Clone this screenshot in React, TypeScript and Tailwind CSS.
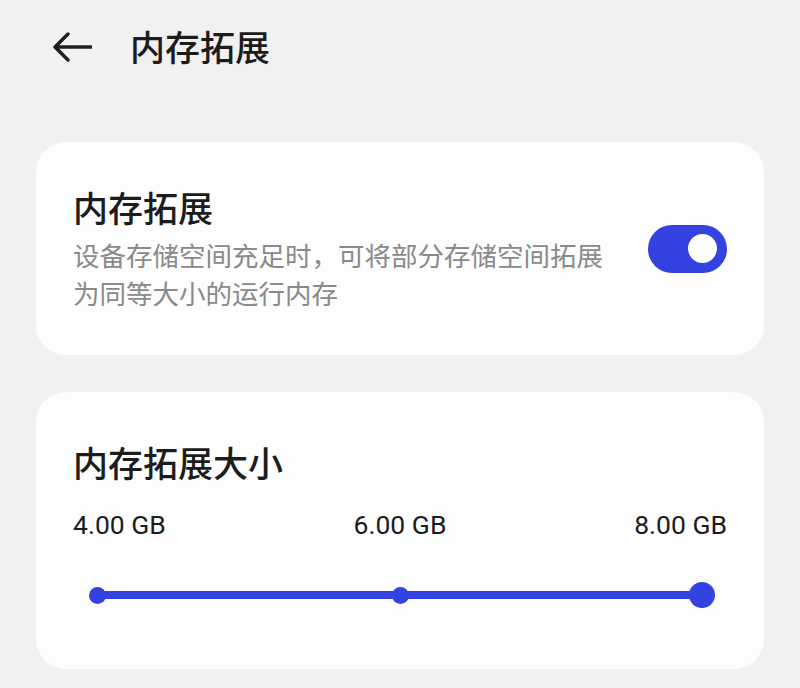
import React from "react";

export default function App() {
  const cjk = { fontFamily: '"Noto Sans CJK SC", "Noto Sans", sans-serif' } as React.CSSProperties;
  return (
    <div className="w-[800px] h-[688px] bg-[#f1f1f1] overflow-hidden" style={cjk}>
      <div className="h-[98px] flex items-center pl-[52px]">
        <svg width="40" height="30" viewBox="0 0 40 30" fill="none" className="mt-[-4px]">
          <path d="M39 15H3M16 2L3 15L16 28" stroke="#1f1f1f" strokeWidth="3.4" strokeLinecap="round" strokeLinejoin="round" />
        </svg>
        <div className="ml-[38px] mt-[-6px] text-[35px] leading-[40px] font-medium text-[#1c1c1c]">内存拓展</div>
      </div>
      <div className="flex flex-col gap-[37px] pt-[44px] px-[36px]">
        <div className="h-[213px] bg-[#fdfdfd] rounded-[30px] px-[37px] flex items-center justify-between">
          <div className="w-[545px]">
            <div className="text-[35px] leading-[42px] font-medium text-[#1c1c1c]">内存拓展</div>
            <div className="mt-[8px] text-[26.5px] leading-[38px] text-[#8a8a8a]">
              设备存储空间充足时，可将部分存储空间拓展为同等大小的运行内存
            </div>
          </div>
          <div className="w-[79px] h-[48px] rounded-full bg-[#3342e0] flex items-center justify-end pr-[10px]">
            <div className="w-[29px] h-[29px] rounded-full bg-white" />
          </div>
        </div>
        <div className="h-[277px] bg-[#fdfdfd] rounded-[30px] px-[37px] pt-[49px]">
          <div className="text-[35px] leading-[42px] font-medium text-[#1c1c1c]">内存拓展大小</div>
          <div
            className="mt-[27px] flex justify-between text-[26.5px] leading-[30px] text-[#1c1c1c]"
            style={{ fontFamily: 'Roboto, "Noto Sans", sans-serif' }}
          >
            <span>4.00 GB</span>
            <span>6.00 GB</span>
            <span>8.00 GB</span>
          </div>
          <div className="relative mt-[51px] ml-[24px] mr-[25px] h-[8px] rounded-full bg-[#3342e0]">
            <div className="absolute left-[-8px] top-[-4px] w-[17px] h-[17px] rounded-full bg-[#3342e0]" />
            <div className="absolute left-[295px] top-[-4px] w-[17px] h-[17px] rounded-full bg-[#3342e0]" />
            <div className="absolute right-[-13px] top-[-9px] w-[26px] h-[26px] rounded-full bg-[#3342e0]" />
          </div>
        </div>
      </div>
    </div>
  );
}
